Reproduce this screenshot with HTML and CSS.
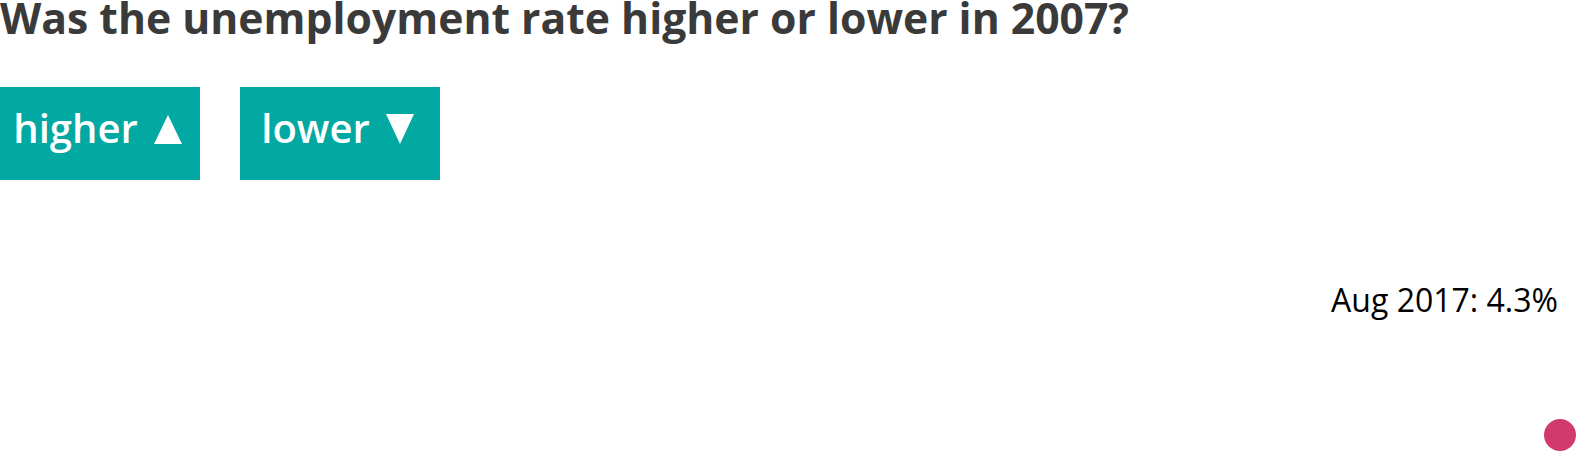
FILE: index.html
```html
<!DOCTYPE html>
<html>
<head>
<meta charset="UTF-8">
<title>You Draw It: Unemployment</title>
<link rel="stylesheet" href="styles.css">
</head>
<body>

<div class="quiz">
	<h2 class="question">Was the unemployment rate higher or lower in 2007?</h2>

	<div class="answers">
		<button class="answer"><span class="text">higher</span><span class="arrow up" aria-label="up"></span></button>
		<button class="answer"><span class="text">lower</span><span class="arrow down" aria-label="down"></span></button>
	</div>

	<svg class="chart" width="1577" height="272" viewBox="0 0 1577 272">
		<text class="label" x="1558" y="132" text-anchor="end">Aug 2017: 4.3%</text>
		<circle class="point" cx="1560" cy="255" r="16"></circle>
	</svg>
</div>

</body>
</html>
```

FILE: styles.css
```css
* {font-family: "Open Sans", "Liberation Sans", sans-serif}

body {
	margin: 0;
	background: #fff;
}

h2.question {
	margin: 0;
	padding-top: 1px;
	font-size: 42.7px;
	font-weight: 700;
	line-height: 34px;
	color: #3a3a3a;
	white-space: nowrap;
}

div.answers {
	display: flex;
	gap: 40px;
	margin-top: 52px;
}

button.answer {
	display: flex;
	justify-content: center;
	align-items: baseline;
	width: 200px;
	height: 93px;
	box-sizing: border-box;
	padding: 13px 5px 0 0;
	border: none;
	background: #02a8a2;
	color: #fff;
	font-size: 40px;
	font-weight: 600;
	line-height: normal;
}

span.arrow {
	display: block;
	width: 0;
	height: 0;
	margin-left: 16px;
	position: relative;
	top: 1px;
	border-left: 14.5px solid transparent;
	border-right: 14.5px solid transparent;
}

span.arrow.up {border-bottom: 29px solid #fff}

span.arrow.down {border-top: 30px solid #fff}

svg.chart {display: block}

svg.chart text.label {
	font-size: 32px;
	fill: #000;
}

svg.chart circle.point {fill: #d23a6e}
```
